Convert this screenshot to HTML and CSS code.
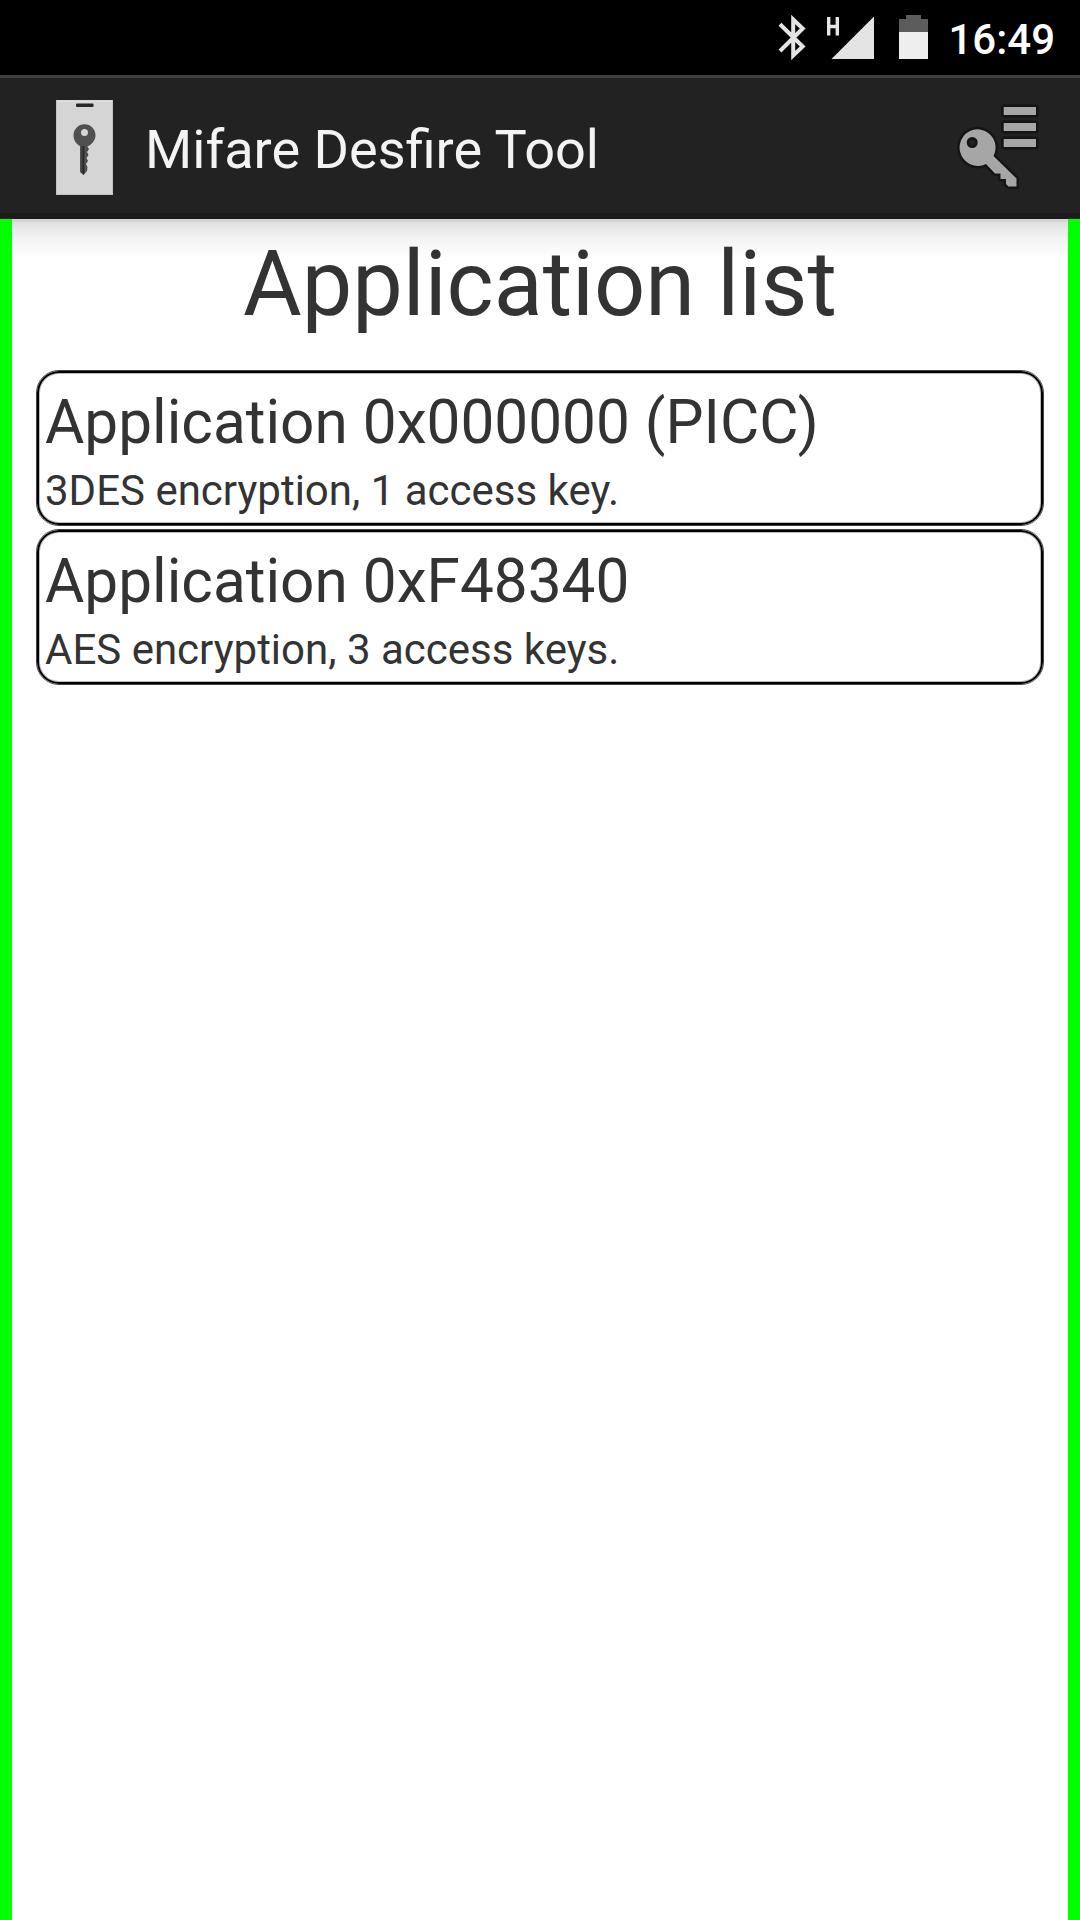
FILE: index.html
```html
<!DOCTYPE html>
<html lang="en">
<head>
<meta charset="utf-8">
<title>Mifare Desfire Tool</title>
<link rel="stylesheet" href="styles.css">
</head>
<body>
<header class="status-bar">
  <svg class="status-icons" width="160" height="60" viewBox="770 0 160 60" aria-hidden="true">
    <path d="M780 24.200L802.700 46.500L793.200 55.500V19.500L802.700 28.500L780 51" fill="none" stroke="#e4e4e4" stroke-width="4"/>
    <path d="M828.700 17V35.500M837.300 17V35.500M828.500 26.500H837.500" fill="none" stroke="#e4e4e4" stroke-width="3.400"/>
    <path d="M874 16.500V59H831.500Z" fill="#e4e4e4"/>
    <path d="M899 32V19H906V15H921V19H928V32Z" fill="#5c5c5c"/>
    <path d="M899 32H928V59H899Z" fill="#eee"/>
  </svg>
  <span class="clock">16:49</span>
</header>
<nav class="action-bar">
  <svg class="app-logo" width="58" height="96" viewBox="0 0 58 96" aria-hidden="true">
    <defs>
      <linearGradient id="shaft" x1="0" x2="1"><stop offset="0" stop-color="#555"/><stop offset=".4" stop-color="#292929"/><stop offset=".6" stop-color="#555"/><stop offset="1" stop-color="#393939"/></linearGradient>
    </defs>
    <rect x=".5" y=".5" width="56" height="94" fill="#d5d5d5" stroke="#c4c4c4"/>
    <path d="M1 1H56.500" stroke="#e9e9e9"/>
    <rect x="20" y="3.500" width="17.500" height="3.500" rx="1" fill="#282828"/>
    <path d="M24 44H32.500L31.500 47L33 49L31 52L32.500 55L30.500 58L32 61L30 64L31.500 67L31 71L27.500 75L24 72Z" fill="url(#shaft)"/>
    <path fill-rule="evenodd" d="M28.500 24.200A11 11 0 0 1 39.500 35.200C39.500 41 35 44.500 32.500 46H24C21 44.500 17.500 41 17.500 35.200A11 11 0 0 1 28.500 24.200ZM28.500 29A3.500 3.500 0 1 0 28.500 36A3.500 3.500 0 1 0 28.500 29Z" fill="#505050"/>
  </svg>
  <h1 class="app-name">Mifare Desfire Tool</h1>
  <svg class="keys-action" width="84" height="90" viewBox="955 102 84 90" aria-label="Keys">
    <g fill="#a6a6a6" stroke="#151515" stroke-width="5" stroke-linejoin="round" paint-order="stroke">
      <path d="M1003.700 107H1036V115H1003.700ZM1003.700 123H1036V131H1003.700ZM1003.700 139H1036V147H1003.700Z"/>
      <path d="M977.300 129.300A18.300 18.300 0 0 1 993.500 156L1016.500 178.500V186.500H1008.500L1006 184V179H1000.500V173.500H995L986 164A18.300 18.300 0 1 1 977.300 129.300Z"/>
    </g>
    <circle cx="972.200" cy="142.500" r="5.500" fill="#151515"/>
    <circle cx="972.200" cy="142.500" r="2.500" fill="#222"/>
  </svg>
</nav>
<main class="content">
  <h2 class="page-title">Application list</h2>
  <ul class="app-list">
    <li class="app-card">
      <p class="app-id">Application 0x000000 (PICC)</p>
      <p class="app-info">3DES encryption, 1 access key.</p>
    </li>
    <li class="app-card">
      <p class="app-id">Application 0xF48340</p>
      <p class="app-info">AES encryption, 3 access keys.</p>
    </li>
  </ul>
</main>
</body>
</html>
```
FILE: styles.css
```css
* { box-sizing: border-box; margin: 0; padding: 0; }
body {
  width: 1080px;
  height: 1920px;
  display: flex;
  flex-direction: column;
  overflow: hidden;
  background: #fff;
  color: #333;
  font-family: Roboto, "Noto Sans", sans-serif;
}
.status-bar {
  height: 75px;
  display: flex;
  justify-content: flex-end;
  gap: 18px;
  padding-right: 25px;
  background: #000;
}
.clock {
  color: #fff;
  font-size: 42px;
  font-weight: 500;
  line-height: 80px;
}
.action-bar {
  height: 144px;
  display: flex;
  align-items: flex-start;
  padding: 22px 41px 0 56px;
  border-top: 3px solid #3f3f3f;
  border-bottom: 6px solid #1b1b1b;
  background: #222;
}
.app-logo { flex: none; }
.app-name {
  flex: 1;
  margin-top: 18px;
  padding-left: 31px;
  color: #f3f3f3;
  font-size: 54.100px;
  font-weight: 400;
  line-height: 64px;
}
.keys-action { flex: none; margin-top: 2px; }
.content {
  flex: 1;
  padding: 23px 24px 0;
  border: solid #0f0;
  border-width: 0 12px;
  background: #fff;
  background-image: linear-gradient(rgba(0,0,0,.17) 3px, rgba(0,0,0,.12) 3px, rgba(0,0,0,.05) 18px, rgba(0,0,0,0) 39px);
  background-origin: border-box;
}
.page-title {
  font-size: 90px;
  font-weight: 400;
  line-height: 86px;
  text-align: center;
}
.app-list {
  display: flex;
  flex-direction: column;
  gap: 3px;
  margin-top: 42px;
  list-style: none;
}
.app-card {
  height: 156px;
  display: flex;
  flex-direction: column;
  gap: 8px;
  padding: 17px 8px 0;
  border: 1px solid #444;
  border-radius: 23px;
  box-shadow: inset 0 0 0 2px #000, inset 0 0 0 3px #bbb;
}
.app-id { font-size: 60.300px; line-height: 70px; }
.app-info { font-size: 42px; line-height: 50px; }
```
